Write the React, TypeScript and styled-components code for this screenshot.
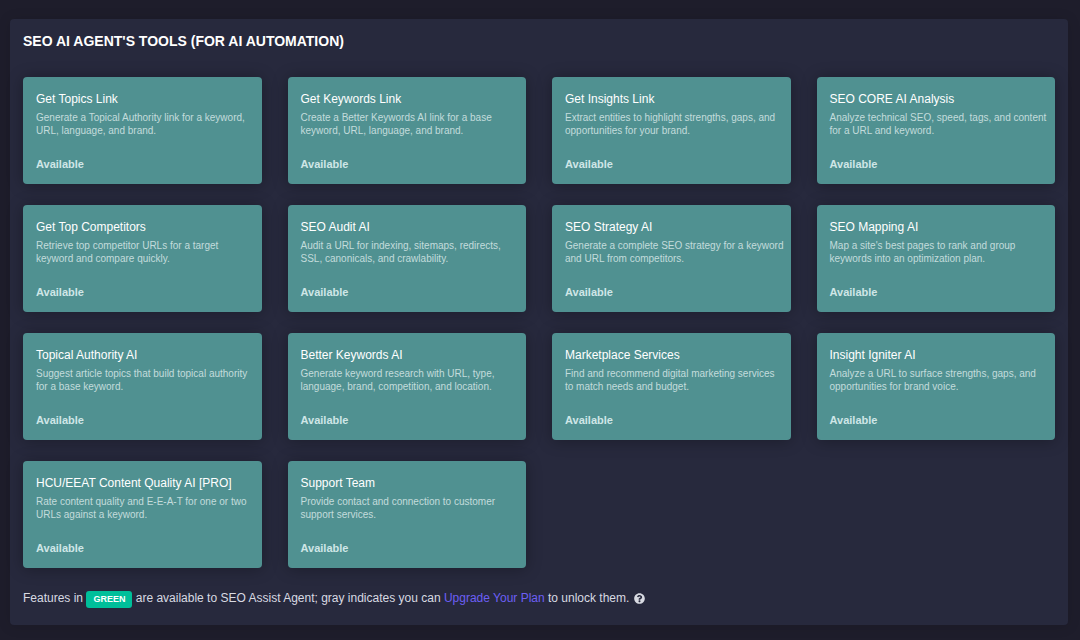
import React from "react";
import styled, { createGlobalStyle } from "styled-components";
import { FaQuestionCircle } from "react-icons/fa";

const GlobalStyle = createGlobalStyle`
  * {
    box-sizing: border-box;
  }
  body {
    margin: 0;
    background: #1e1d2b;
    color: #d8dae2;
    font-family: "Liberation Sans", Arial, sans-serif;
  }
`;

const Page = styled.main`
  padding: 19px 12px 15px 10px;
`;

const Panel = styled.section`
  padding: 13px 13px 16px;
  border-radius: 4px;
  background: #27293d;
  box-shadow: 0 1px 14px rgba(0, 0, 0, 0.12);
`;

const Heading = styled.h1`
  margin: 0 0 27px;
  color: #ffffff;
  font-size: 14px;
  font-weight: 700;
  line-height: 18px;
  text-transform: uppercase;
`;

const ToolGrid = styled.ul`
  display: grid;
  grid-template-columns: repeat(4, minmax(0, 1fr));
  gap: 21px 26px;
  margin: 0;
  padding: 0;
  list-style: none;
`;

const ToolCard = styled.li`
  padding: 13px 6px 13px 13px;
  border-radius: 4px;
  background: #509191;
  box-shadow: 0 1px 16px rgba(0, 0, 0, 0.3);
`;

const ToolTitle = styled.h2`
  margin: 0 0 3px;
  color: #ffffff;
  font-size: 12px;
  font-weight: 400;
  line-height: 18px;
`;

const ToolText = styled.p`
  margin: 0 0 20px;
  color: #c3dcdc;
  font-size: 10px;
  line-height: 13px;
`;

const Status = styled.strong`
  display: block;
  color: #cfe6e7;
  font-size: 11px;
  font-weight: 700;
  line-height: 14px;
`;

const Note = styled.p`
  margin: 20px 0 0;
  font-size: 12px;
  line-height: 21px;
`;

const Badge = styled.span`
  display: inline-block;
  padding: 0 7px;
  border-radius: 3px;
  background: #00bf9a;
  color: #ffffff;
  font-size: 9px;
  font-weight: 700;
  line-height: 17px;
`;

const PlanLink = styled.a`
  color: #6c5ff5;
  text-decoration: none;
`;

const HelpIcon = styled(FaQuestionCircle)`
  width: 11px;
  height: 11px;
  margin-left: 1px;
  vertical-align: -2px;
`;

const tools = [
  ["Get Topics Link", "Generate a Topical Authority link for a keyword, URL, language, and brand."],
  ["Get Keywords Link", "Create a Better Keywords AI link for a base keyword, URL, language, and brand."],
  ["Get Insights Link", "Extract entities to highlight strengths, gaps, and opportunities for your brand."],
  ["SEO CORE AI Analysis", "Analyze technical SEO, speed, tags, and content for a URL and keyword."],
  ["Get Top Competitors", "Retrieve top competitor URLs for a target keyword and compare quickly."],
  ["SEO Audit AI", "Audit a URL for indexing, sitemaps, redirects, SSL, canonicals, and crawlability."],
  ["SEO Strategy AI", "Generate a complete SEO strategy for a keyword and URL from competitors."],
  ["SEO Mapping AI", "Map a site's best pages to rank and group keywords into an optimization plan."],
  ["Topical Authority AI", "Suggest article topics that build topical authority for a base keyword."],
  ["Better Keywords AI", "Generate keyword research with URL, type, language, brand, competition, and location."],
  ["Marketplace Services", "Find and recommend digital marketing services to match needs and budget."],
  ["Insight Igniter AI", "Analyze a URL to surface strengths, gaps, and opportunities for brand voice."],
  ["HCU/EEAT Content Quality AI [PRO]", "Rate content quality and E-E-A-T for one or two URLs against a keyword."],
  ["Support Team", "Provide contact and connection to customer support services."],
];

export default function App() {
  return (
    <Page>
      <GlobalStyle />
      <Panel>
        <Heading>SEO AI Agent's Tools (for AI Automation)</Heading>
        <ToolGrid>
          {tools.map(([title, text]) => (
            <ToolCard key={title}>
              <ToolTitle>{title}</ToolTitle>
              <ToolText>{text}</ToolText>
              <Status>Available</Status>
            </ToolCard>
          ))}
        </ToolGrid>
        <Note>
          Features in <Badge>GREEN</Badge> are available to SEO Assist Agent; gray
          indicates you can <PlanLink href="#upgrade">Upgrade Your Plan</PlanLink> to
          unlock them. <HelpIcon aria-label="Help" />
        </Note>
      </Panel>
    </Page>
  );
}
